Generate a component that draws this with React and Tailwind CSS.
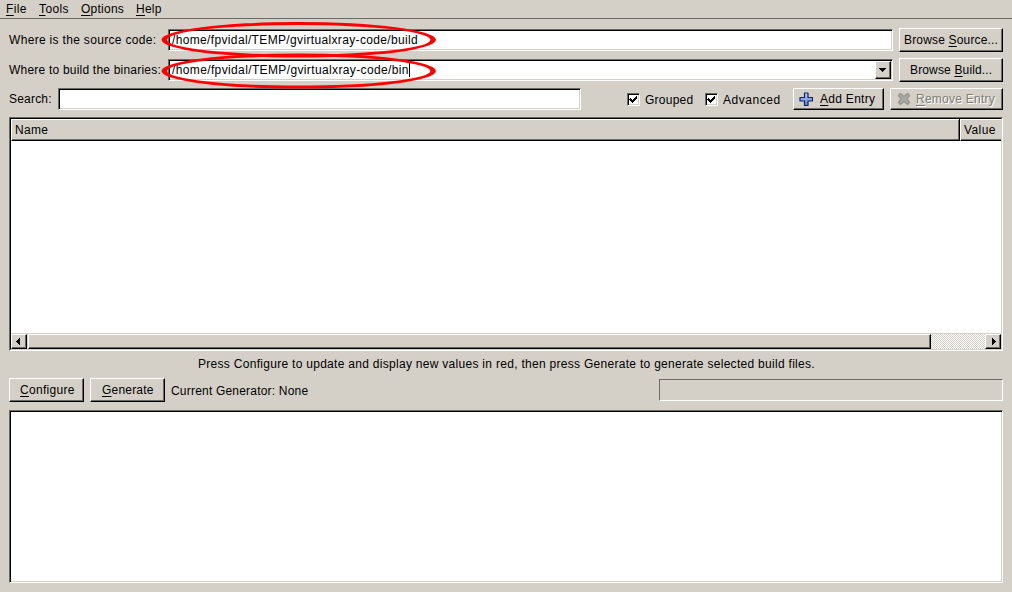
import React from "react";

const sunken =
  "border-t border-l border-t-[#6b6a63] border-l-[#6b6a63] border-b border-r border-b-white border-r-white bg-white shadow-[inset_1px_1px_0_#000,inset_-1px_-1px_0_#d4d0c8]";
const raised =
  "border-t border-l border-t-white border-l-white border-b border-r border-b-black border-r-black bg-[#d4d0c8] shadow-[inset_-1px_-1px_0_#6b6a63]";

function Button({ className, children }) {
  return (
    <button className={`${raised} flex shrink-0 items-center whitespace-nowrap ${className}`}>
      {children}
    </button>
  );
}

function Key({ children }) {
  return <span className="underline decoration-1 underline-offset-2">{children}</span>;
}

function Checkbox({ label, className }) {
  return (
    <label className={`flex shrink-0 items-center ${className}`}>
      <span className={`${sunken} h-[13px] w-[13px] shrink-0`}>
        <svg viewBox="0 0 11 11" className="block h-[11px] w-[11px]" shapeRendering="crispEdges">
          <path d="M2 4h1v1h1v1h1v-1h1v-1h1v-1h1v-1h1v3h-1v1h-1v1h-1v1h-1v1h-1v-1h-1v-1h-1v-1h-1z" />
        </svg>
      </span>
      <span className="ml-[5px] pt-px">{label}</span>
    </label>
  );
}

function Arrow({ d }) {
  return (
    <svg viewBox="0 0 8 8" className="h-2 w-2" shapeRendering="crispEdges">
      <path d={d} />
    </svg>
  );
}

function PlusIcon() {
  return (
    <svg viewBox="0 0 14 14" className="h-[14px] w-[14px]">
      <defs>
        <linearGradient id="plus" x1="0" y1="0" x2="0" y2="1">
          <stop offset="0" stopColor="#b4ccf4" />
          <stop offset="1" stopColor="#5a80d4" />
        </linearGradient>
      </defs>
      <path d="M5.500 1h3.500v4.500h4.500v3.500h-4.500v4.500h-3.500v-4.500h-4.500v-3.500h4.500z" fill="url(#plus)" stroke="#10206c" strokeWidth="1.2" strokeLinejoin="round" />
    </svg>
  );
}

function CrossIcon() {
  return (
    <svg viewBox="0 0 14 14" className="h-[14px] w-[14px]">
      <path d="M3.500 1.500 7 4.500l3.500-3 2 2L10 7l2.500 3.500-2 2L7 9.500l-3.500 3-2-2L4 7 1.500 3.500z" fill="#aaa8a2" stroke="#989690" strokeWidth="1.300" strokeLinejoin="round" />
    </svg>
  );
}

function HeaderCell({ className, children }) {
  return (
    <div className={`flex h-[22px] items-center border-t border-l border-b border-t-white border-l-white border-b-black bg-[#d4d0c8] pl-[3px] ${className}`}>
      {children}
    </div>
  );
}

export default function App() {
  return (
    <div className="relative flex h-[592px] w-[1012px] flex-col overflow-hidden bg-[#d4d0c8] font-['Liberation_Sans',Arial,sans-serif] text-[12px] leading-[14px] tracking-[0.29px] text-black">
      <nav className="flex h-[19px] shrink-0 border-b border-[#6b6a63] pt-[2px] pl-[6px] tracking-[0.4px]">
        <span className="w-[33px]"><Key>F</Key>ile</span>
        <span className="w-[42px]"><Key>T</Key>ools</span>
        <span className="w-[55px] tracking-[0.25px]"><Key>O</Key>ptions</span>
        <span className="tracking-[0.25px]"><Key>H</Key>elp</span>
      </nav>

      <main className="flex flex-1 flex-col px-[9px] pt-[9px]">
        <div className="flex h-6 items-center">
          <span className="w-[159px] whitespace-nowrap tracking-[0.32px]">Where is the source code:</span>
          <div className={`${sunken} flex h-[22px] w-[725px] items-center pl-[3px]`}>
            <span className="whitespace-nowrap tracking-[0.35px]">/home/fpvidal/TEMP/gvirtualxray-code/build</span>
          </div>
          <Button className="ml-[6px] h-6 w-[104px] pl-1 tracking-[0.17px]"><span>Browse <Key>S</Key>ource...</span></Button>
        </div>
        <div className="mt-[6px] flex h-6 items-center">
          <span className="w-[159px] whitespace-nowrap tracking-[0.21px]">Where to build the binaries:</span>
          <div className={`${sunken} flex h-[22px] w-[725px] items-center pr-px pl-[3px]`}>
            <span className="whitespace-nowrap tracking-[0.37px]">/home/fpvidal/TEMP/gvirtualxray-code/bin</span>
            <span className="h-[14px] w-px bg-black" />
            <Button className="ml-auto h-[18px] w-4 justify-center"><Arrow d="M0 2h7v1h-1v1h-1v1h-1v1h-1v-1h-1v-1h-1v-1h-1z" /></Button>
          </div>
          <Button className="ml-[6px] h-6 w-[104px] pl-[10px] tracking-[0.15px]"><span>Browse <Key>B</Key>uild...</span></Button>
        </div>
        <div className="mt-[6px] flex h-[22px] shrink-0 items-center">
          <span className="w-[49px] tracking-[0.2px]">Search:</span>
          <div className={`${sunken} h-[22px] w-[523px]`} />
          <Checkbox label="Grouped" className="ml-[46px] w-[78px] tracking-[0.25px]" />
          <Checkbox label="Advanced" className="w-[88px] tracking-[0.55px]" />
          <Button className="h-[22px] w-[91px] pl-[5px]">
            <PlusIcon />
            <span className="ml-[7px]"><Key>A</Key>dd Entry</span>
          </Button>
          <Button className="ml-[6px] h-[22px] w-[113px] pl-[6px]">
            <CrossIcon />
            <span className="ml-[5px] tracking-[0.25px] text-[#807d74] [text-shadow:1px_1px_0_#fff]"><Key>R</Key>emove Entry</span>
          </Button>
        </div>

        <section className="mt-[7px] flex h-[234px] shrink-0 flex-col border-t border-r border-b border-l border-t-[#6b6a63] border-r-white border-b-white border-l-[#6b6a63] bg-white">
          <div className="flex flex-1 flex-col border-t border-r border-b border-l border-t-black border-r-[#d4d0c8] border-b-[#d4d0c8] border-l-black">
            <div className="flex">
              <HeaderCell className="w-[948px] shadow-[inset_-1px_-1px_0_#6b6a63]">Name</HeaderCell>
              <HeaderCell className="ml-px flex-1 shadow-[-1px_0_0_#000,inset_0_-1px_0_#6b6a63] tracking-[0.4px]">Value</HeaderCell>
            </div>
            <div className="mt-auto flex h-[16px] border-t border-[#d4d0c8] bg-[repeating-conic-gradient(#d4d0c8_0_25%,#fff_0_50%)] bg-[length:2px_2px]">
              <Button className="h-[15px] w-4 justify-center"><Arrow d="M5 0v7h-1v-1h-1v-1h-1v-1h-1v-1h1v-1h1v-1h1v-1z" /></Button>
              <div className="w-px bg-[#d4d0c8]" />
              <div className={`${raised} h-[15px] w-[903px]`} />
              <Button className="ml-auto h-[15px] w-4 justify-center"><Arrow d="M3 0v7h1v-1h1v-1h1v-1h1v-1h-1v-1h-1v-1h-1v-1z" /></Button>
            </div>
          </div>
        </section>

        <p className="mt-[6px] h-[21px] pl-[189px] whitespace-nowrap">
          Press Configure to update and display new values in red, then press Generate to generate selected build files.
        </p>

        <div className="flex h-6 shrink-0 items-center">
          <Button className="h-6 w-[75px] pl-[10px]"><span><Key>C</Key>onfigure</span></Button>
          <Button className="ml-[6px] h-6 w-[75px] pl-[11px] tracking-[0.2px]"><span><Key>G</Key>enerate</span></Button>
          <span className="ml-[6px] pt-px tracking-[0.2px]">Current Generator: None</span>
          <div className="ml-auto h-[22px] w-[344px] border-t border-r border-b border-l border-t-[#6b6a63] border-r-white border-b-white border-l-[#6b6a63]" />
        </div>

        <div className={`${sunken} mt-2 h-[173px] shrink-0`} />
      </main>

      <svg className="pointer-events-none absolute top-0 left-0 h-[100px] w-[450px]" viewBox="0 0 450 100" fill="#fe0000" fillRule="evenodd">
        <path d="M161.500 39.800a137.200 17.800 0 0 1 274.400 0a137.200 17.800 0 0 1 -274.400 0zM167 39.800a131.700 14.800 0 0 0 263.400 0a131.700 14.800 0 0 0 -263.400 0z" />
        <path d="M161.500 71a137.200 17.600 0 0 1 274.400 0a137.200 17.600 0 0 1 -274.400 0zM167 71a131.700 14.600 0 0 0 263.400 0a131.700 14.600 0 0 0 -263.400 0z" />
      </svg>
    </div>
  );
}
